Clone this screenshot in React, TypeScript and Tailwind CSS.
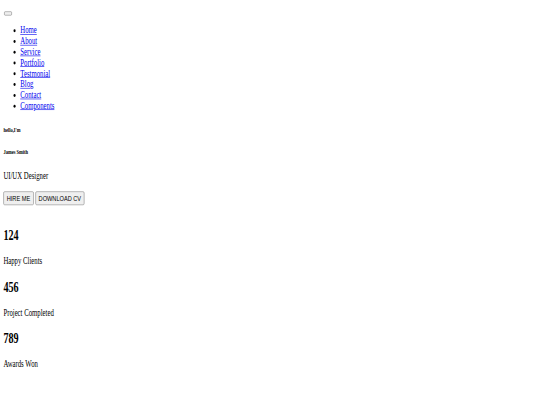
const LINKS = ['Home', 'About', 'Service', 'Portfolio', 'Testmonial', 'Blog', 'Contact', 'Components'];

const STATS = [
  { value: '124', label: 'Happy Clients' },
  { value: '456', label: 'Project Completed' },
  { value: '789', label: 'Awards Won' },
];

const btn =
  'inline-block align-baseline rounded-[3px] border border-[#767676] bg-[#efefef] px-[7px] py-[3px] text-[13.333px] leading-[15px] text-black font-["Liberation_Sans",Arial,sans-serif]';

export default function App() {
  return (
    <div className="h-[405px] w-[540px] overflow-hidden bg-white">
      {/* the page was captured at 1280px wide and squeezed into the frame */}
      <div className="w-[1280px] origin-top-left scale-x-[0.4219] scale-y-[0.598] p-2 font-['Liberation_Serif','Times_New_Roman',serif] text-[16px] text-black">
        <header>
          <nav>
            <button className="mt-[11px] ml-[2px] block h-[7px] w-[18px] rounded-[2px] border border-[#767676] bg-[#efefef]" />
            <ul className="mt-[16px] list-disc pl-10">
              {LINKS.map((l) => (
                <li key={l} className="leading-[18px]">
                  <a href="#" className="text-[#0000ee] underline">
                    {l}
                  </a>
                </li>
              ))}
            </ul>
          </nav>
        </header>

        <section>
          <h6 className="mt-[25px] text-[10.72px] leading-[12px] font-bold">hello,I'm</h6>
          <h6 className="mt-[25px] text-[10.72px] leading-[12px] font-bold">James Smith</h6>
          <p className="mt-[26px] leading-[18px]">UI/UX Designer</p>
          <div className="mt-[16px] flex gap-[4px]">
            <button className={btn}>HIRE ME</button>
            <button className={btn}>DOWNLOAD CV</button>
          </div>
        </section>

        <section className="mt-[37px]">
          {STATS.map((s) => (
            <div key={s.value}>
              <h2 className="my-5 text-2xl leading-[28px] font-bold">{s.value}</h2>
              <p className="my-4 leading-[18px]">{s.label}</p>
            </div>
          ))}
        </section>
      </div>
    </div>
  );
}
